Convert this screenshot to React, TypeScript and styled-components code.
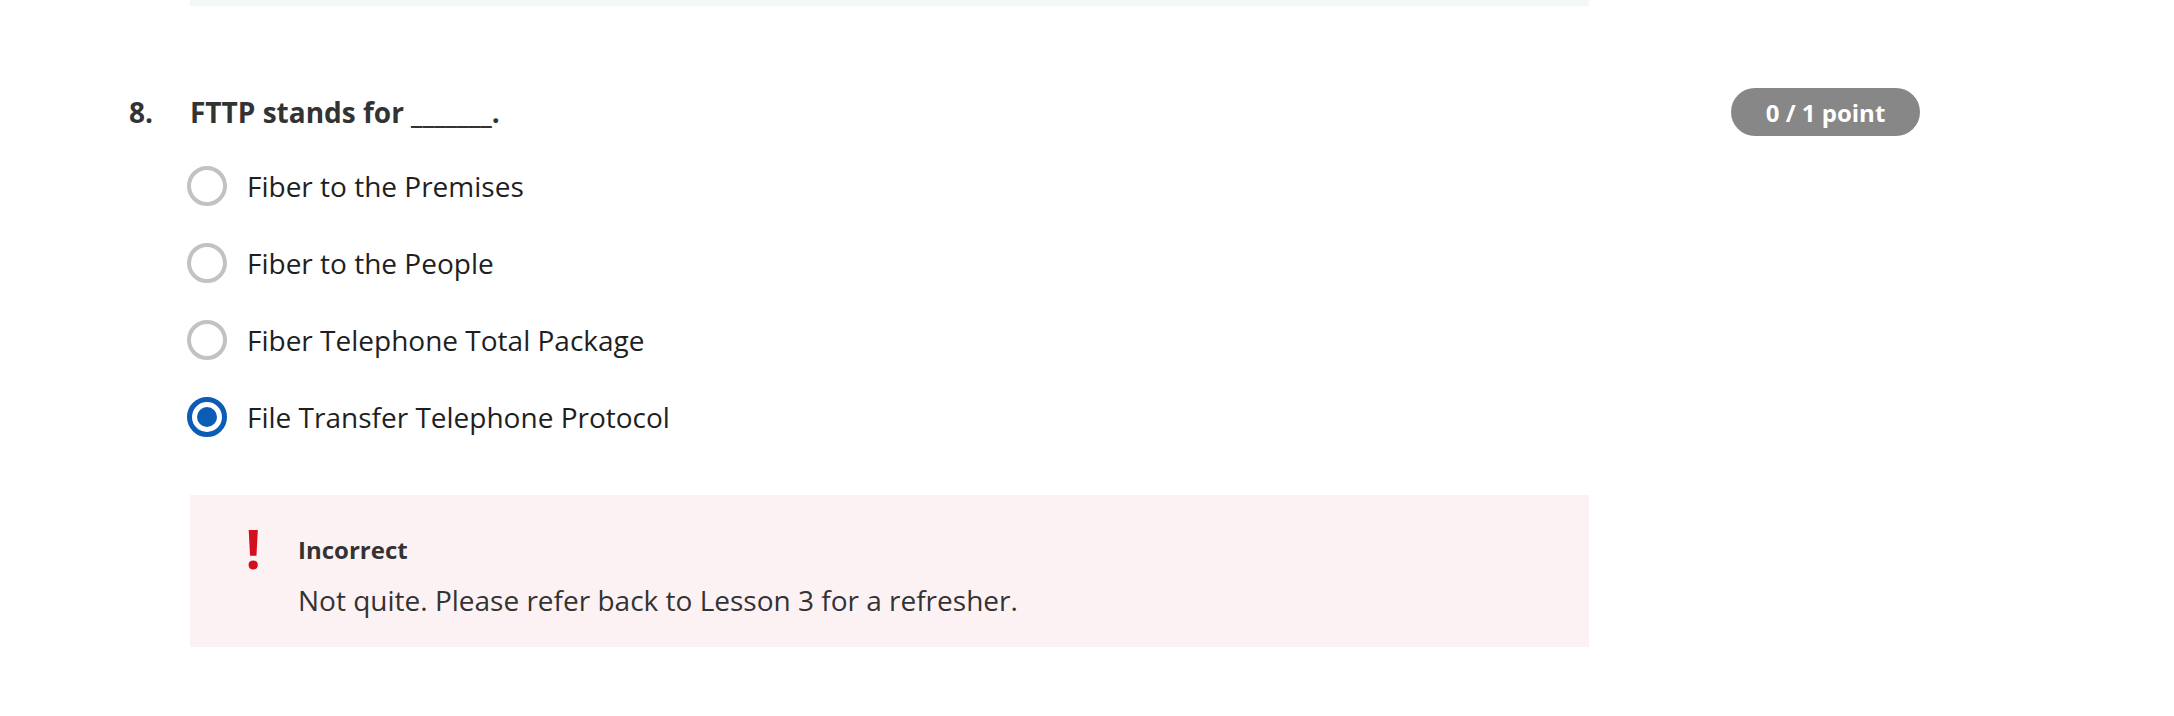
import React from "react";
import styled, { createGlobalStyle } from "styled-components";

const Global = createGlobalStyle`
  html, body { margin: 0; padding: 0; background: #ffffff; }
  body { font-family: "Open Sans", "Noto Sans", sans-serif; color: #1f1f1f; }
`;

const Page = styled.div`
  width: 2174px;
  height: 716px;
  overflow: hidden;
  box-sizing: border-box;
  padding-left: 129px;
`;

const Inner = styled.div`
  width: 1791px;
`;

const PrevFeedback = styled.div`
  margin-left: 61px;
  width: 1399px;
  height: 6px;
  background: #f2f8f6;
`;

const QuestionRow = styled.div`
  display: grid;
  grid-template-columns: 61px 1fr auto;
  align-items: center;
  margin-top: 82px;
`;

const Number = styled.div`
  font-weight: 700;
  font-size: 28px;
  line-height: 38px;
  color: #333333;
`;

const Prompt = styled.div`
  font-weight: 700;
  font-size: 28px;
  line-height: 38px;
  color: #333333;
`;

const Badge = styled.div`
  height: 48px;
  width: 189px;
  border-radius: 24px;
  background: #878787;
  color: #ffffff;
  font-weight: 700;
  font-size: 24px;
  display: flex;
  align-items: center;
  justify-content: center;
`;

const Options = styled.div`
  margin-left: 58px;
  margin-top: 30px;
  display: flex;
  flex-direction: column;
  gap: 37px;
`;

const Option = styled.label`
  display: flex;
  align-items: center;
  gap: 20px;
  font-size: 28px;
  line-height: 39px;
  color: #1f1f1f;
`;

const Radio = styled.span<{ $checked?: boolean }>`
  width: 40px;
  height: 40px;
  box-sizing: border-box;
  border-radius: 50%;
  border: ${(p) => (p.$checked ? "5px solid #0b5cb5" : "4px solid #c2c2c2")};
  display: flex;
  align-items: center;
  justify-content: center;
  flex-shrink: 0;
  &::after {
    content: "";
    display: ${(p) => (p.$checked ? "block" : "none")};
    width: 20px;
    height: 20px;
    border-radius: 50%;
    background: #0b5cb5;
  }
`;

const Feedback = styled.div`
  margin-left: 61px;
  margin-top: 58px;
  width: 1399px;
  height: 152px;
  box-sizing: border-box;
  background: #fdf2f3;
  display: grid;
  grid-template-columns: 108px 1fr;
  padding-top: 38px;
`;

const Bang = styled.div`
  color: #d30f1d;
  font-weight: 700;
  font-size: 54px;
  line-height: 30px;
  text-align: right;
  padding-right: 37px;
`;

const FeedbackText = styled.div`
  display: flex;
  flex-direction: column;
  gap: 16px;
`;

const FeedbackTitle = styled.div`
  font-weight: 700;
  font-size: 24px;
  line-height: 34px;
  color: #333333;
`;

const FeedbackBody = styled.div`
  font-size: 28px;
  line-height: 34px;
  color: #333333;
`;

const options = [
  "Fiber to the Premises",
  "Fiber to the People",
  "Fiber Telephone Total Package",
  "File Transfer Telephone Protocol",
];

export default function App() {
  return (
    <>
      <Global />
      <Page>
        <Inner>
          <PrevFeedback />
          <QuestionRow>
            <Number>8.</Number>
            <Prompt>FTTP stands for _______.</Prompt>
            <Badge>0 / 1 point</Badge>
          </QuestionRow>
          <Options>
            {options.map((o, i) => (
              <Option key={o}>
                <Radio $checked={i === 3} />
                {o}
              </Option>
            ))}
          </Options>
          <Feedback>
            <Bang>!</Bang>
            <FeedbackText>
              <FeedbackTitle>Incorrect</FeedbackTitle>
              <FeedbackBody>
                Not quite. Please refer back to Lesson 3 for a refresher.
              </FeedbackBody>
            </FeedbackText>
          </Feedback>
        </Inner>
      </Page>
    </>
  );
}
